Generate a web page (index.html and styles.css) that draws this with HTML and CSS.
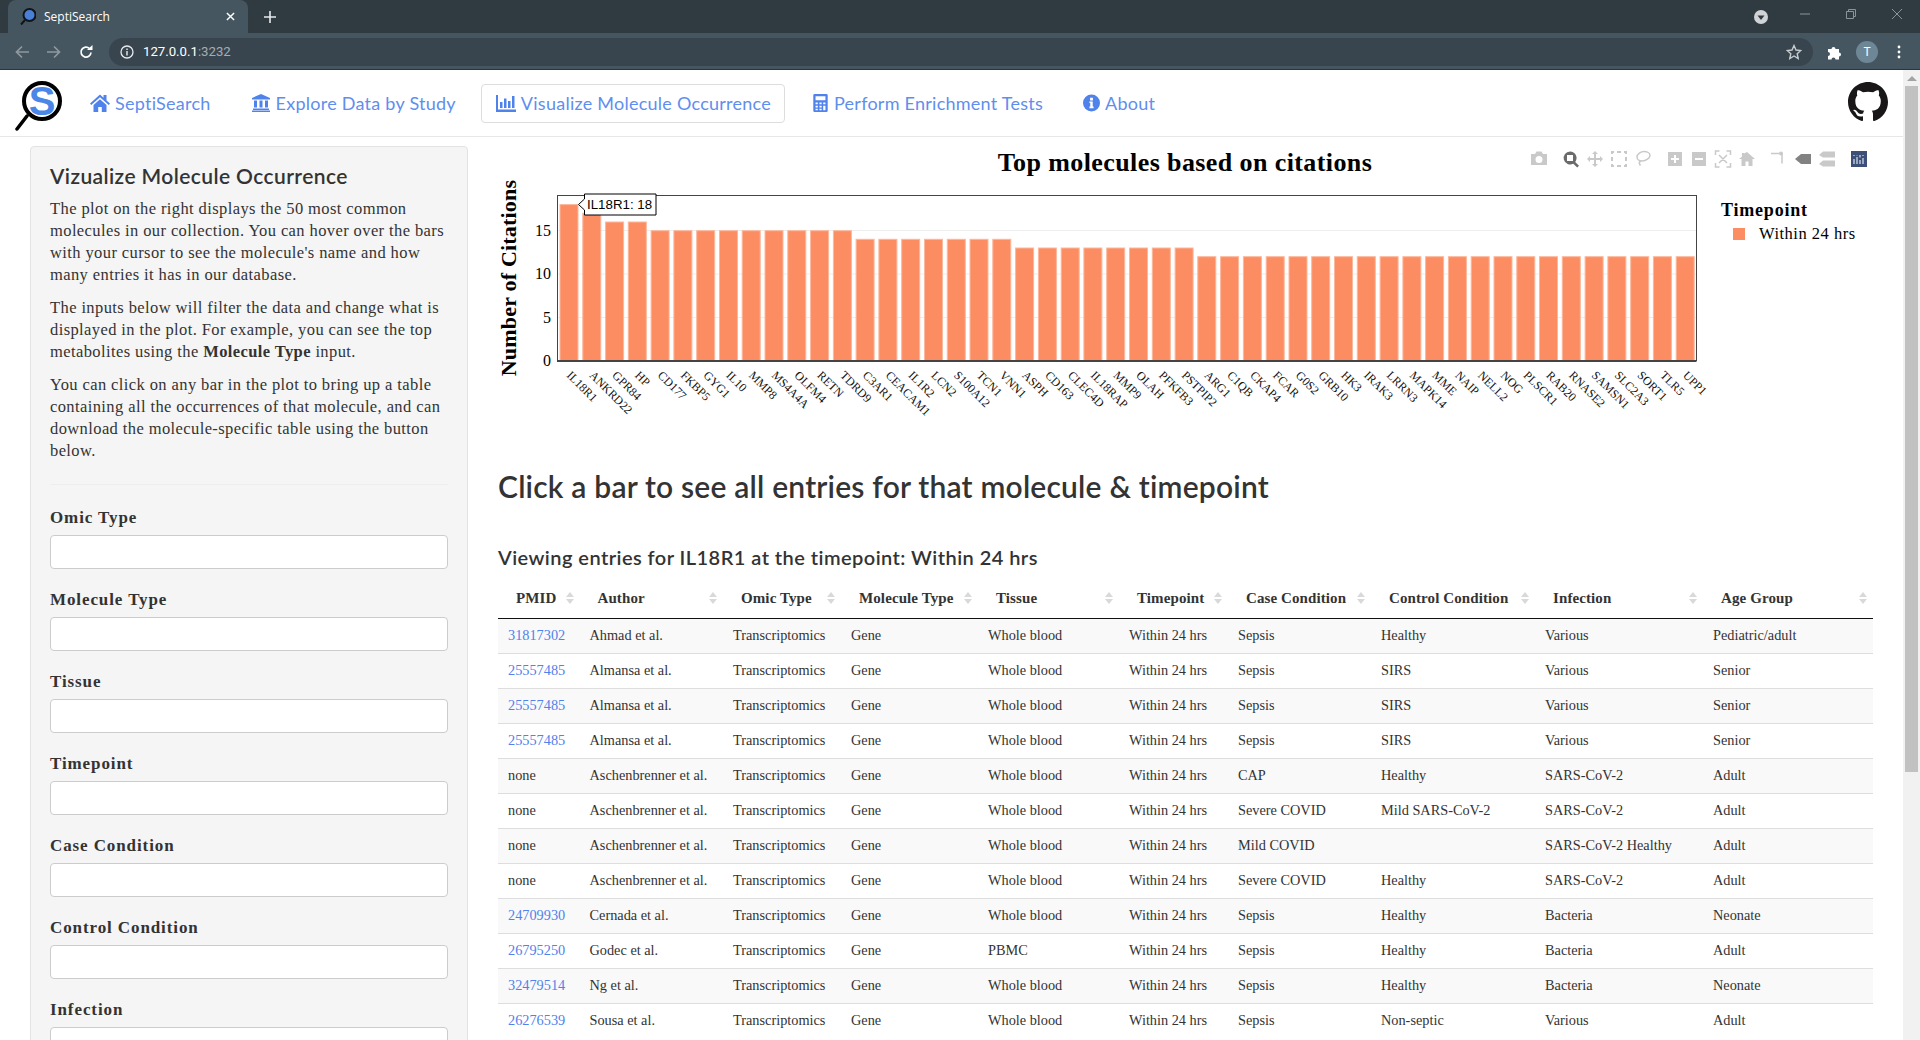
FILE: index.html
```html
<!DOCTYPE html>
<html>
  <head>
    <meta charset="utf-8" />
    <title>SeptiSearch</title>
    <link rel="stylesheet" href="styles.css">
  </head>
  <body>
    <!-- browser frame -->
    <div class="tabstrip">
      <div class="tab">
        <svg class="favicon" viewBox="0 0 16 18"><circle cx="9.5" cy="7" r="6" fill="#4a7fd8" stroke="#10151a" stroke-width="2"/><line x1="5" y1="12" x2="1" y2="16.5" stroke="#10151a" stroke-width="2"/></svg>
        <span class="tab-title">SeptiSearch</span>
        <svg class="tab-close" viewBox="0 0 10 10"><path d="M1 1l8 8M9 1l-8 8" stroke="#fff" stroke-width="1.6"/></svg>
      </div>
      <svg class="tab-new" viewBox="0 0 12 12"><path d="M6 0v12M0 6h12" stroke="#e8eaed" stroke-width="1.6"/></svg>
      <div class="window-controls">
        <svg class="tab-search" viewBox="0 0 14 14"><circle cx="7" cy="7" r="7" fill="#d0d4d6"/><path d="M3.5 5.5h7L7 10z" fill="#2f3a41"/></svg>
        <svg class="win-btn" viewBox="0 0 10 10"><path d="M0 5h10" stroke="#8b9499"/></svg>
        <svg class="win-btn" viewBox="0 0 10 10"><path d="M.5 2.5h7v7h-7zM2.5 2.500v-2h7v7h-2" fill="none" stroke="#8b9499"/></svg>
        <svg class="win-btn" viewBox="0 0 10 10"><path d="M0 0l10 10M10 0L0 10" stroke="#8b9499"/></svg>
      </div>
    </div>
    <div class="toolbar">
      <svg class="tool-icon" viewBox="0 0 14 14"><path d="M14 7H2M7 1.500L1.500 7 7 12.500" fill="none" stroke="#8f999f" stroke-width="1.700"/></svg>
      <svg class="tool-icon" viewBox="0 0 14 14"><path d="M0 7h12M7 1.500L12.500 7 7 12.500" fill="none" stroke="#8f999f" stroke-width="1.700"/></svg>
      <svg class="tool-icon" viewBox="0 0 14 14"><path d="M12 7.500A5 5 0 1 1 10.500 3.500" fill="none" stroke="#fff" stroke-width="1.700"/><path d="M8 5h5.500V0z" fill="#fff"/></svg>
      <div class="omnibox">
        <svg class="info-icon" viewBox="0 0 14 14"><circle cx="7" cy="7" r="6" fill="none" stroke="#e8eaed" stroke-width="1.300"/><path d="M7 6v4.500M7 3.500v1.400" stroke="#e8eaed" stroke-width="1.400"/></svg>
        <span class="url">127.0.0.1<span class="url-port">:3232</span></span>
        <svg class="star-icon" viewBox="0 0 16 16"><path d="M8 1.500l2 4.500 4.800.5-3.600 3.200 1 4.800L8 12l-4.200 2.500 1-4.800L1.200 6.500 6 6z" fill="none" stroke="#c6cbce" stroke-width="1.400"/></svg>
      </div>
      <svg class="puzzle-icon" viewBox="0 0 16 16"><path d="M1 5h3.500a2 2 0 1 1 4 0H12v3.500a2 2 0 1 1 0 4V15.500H8.500a2 2 0 1 0-4 0H1v-3.500a2 2 0 1 0 0-4z" fill="#fff"/></svg>
      <div class="avatar">T</div>
      <svg class="menu-icon" viewBox="0 0 4 14"><circle cx="2" cy="2" r="1.400" fill="#fff"/><circle cx="2" cy="7" r="1.400" fill="#fff"/><circle cx="2" cy="12" r="1.400" fill="#fff"/></svg>
    </div>

    <div class="viewport">
      <div class="page">
        <nav class="navbar">
          <svg class="logo" viewBox="0 0 48 50">
            <circle cx="27" cy="20" r="18" fill="#fff" stroke="#000" stroke-width="4"/>
            <text class="logo-s" x="27" y="34" text-anchor="middle">S</text>
            <line x1="12" y1="35" x2="2" y2="48" stroke="#000" stroke-width="3.500" stroke-linecap="round"/>
          </svg>
          <a class="nav-item">
            <svg class="nav-icon" viewBox="0 0 20 18"><path d="M10 0.500L0 9.500l1.300 1.400L10 3.300l8.700 7.600 1.300-1.400-3.500-3.100V1h-3v2.700zM3.500 11v7h4.700v-5h3.600v5h4.700v-7L10 5.200z" fill="#5082eb"/></svg>
            SeptiSearch
          </a>
          <a class="nav-item">
            <svg class="nav-icon" viewBox="0 0 20 18"><path d="M10 0L1 4v1.500h18V4zM3 6.500h3v7H3zM8.500 6.500h3v7h-3zM14 6.500h3v7h-3zM2 14.500h16V16H2zM1 16.500h18V18H1z" fill="#5082eb"/></svg>
            Explore Data by Study
          </a>
          <a class="nav-item nav-item-active">
            <svg class="nav-icon" viewBox="0 0 20 18"><path d="M0 1h2v14.500h18V18H0zM4 8h2.500v6H4zM8 4.500h2.500V14H8zM12 7h2.500v7H12zM16 2h2.500v12H16z" fill="#5082eb"/></svg>
            Visualize Molecule Occurrence
          </a>
          <a class="nav-item">
            <svg class="nav-icon nav-icon-narrow" viewBox="0 0 16 20"><path fill-rule="evenodd" d="M1.500 0h13A1.500 1.500 0 0 1 16 1.500v17a1.500 1.500 0 0 1-1.500 1.500h-13A1.500 1.500 0 0 1 0 18.500v-17A1.500 1.500 0 0 1 1.500 0zM2.500 2.500v4.500h11V2.500zM2.500 9.500v2h2.500v-2zM6.800 9.500v2h2.500v-2zM11 9.500v2h2.500v-2zM2.500 13v2h2.500v-2zM6.800 13v2h2.500v-2zM11 13v5h2.500v-5zM2.500 16.500v1.500h2.500v-1.500zM6.800 16.500v1.500h2.500v-1.500z" fill="#5082eb"/></svg>
            Perform Enrichment Tests
          </a>
          <a class="nav-item">
            <svg class="nav-icon nav-icon-narrow" viewBox="0 0 18 18"><path fill-rule="evenodd" d="M9 0a9 9 0 1 1 0 18A9 9 0 0 1 9 0zM7.500 3.500v2.800h3V3.500zM6.800 7.500v1.600h.9v3.700h-.9v1.700h4.400v-1.700h-.9V7.500z" fill="#5082eb"/></svg>
            About
          </a>
          <svg class="github" viewBox="0 0 16 16"><path fill="#191717" d="M8 0C3.580 0 0 3.580 0 8c0 3.540 2.290 6.530 5.470 7.590.4.070.55-.17.55-.38 0-.19-.01-.82-.01-1.490-2.010.37-2.530-.49-2.690-.94-.09-.23-.48-.94-.82-1.130-.28-.15-.68-.52-.01-.53.63-.01 1.080.58 1.230.82.72 1.210 1.870.87 2.330.66.07-.52.28-.87.51-1.070-1.780-.2-3.640-.89-3.640-3.950 0-.87.31-1.590.82-2.150-.08-.2-.36-1.020.08-2.120 0 0 .67-.21 2.200.82.64-.18 1.320-.27 2-.27.68 0 1.360.09 2 .27 1.530-1.040 2.200-.82 2.200-.82.44 1.100.16 1.920.08 2.120.51.56.82 1.270.82 2.150 0 3.070-1.870 3.750-3.650 3.950.29.25.54.73.54 1.480 0 1.070-.01 1.930-.01 2.200 0 .21.15.46.55.38A8.013 8.013 0 0 0 16 8c0-4.420-3.580-8-8-8z"/></svg>
        </nav>

        <div class="layout">
          <aside class="sidebar">
            <h4 class="side-title">Vizualize Molecule Occurrence</h4>
            <p>The plot on the right displays the 50 most common molecules in our collection. You can hover over the bars with your cursor to see the molecule's name and how many entries it has in our database.</p>
            <p>The inputs below will filter the data and change what is displayed in the plot. For example, you can see the top metabolites using the <b>Molecule Type</b> input.</p>
            <p>You can click on any bar in the plot to bring up a table containing all the occurrences of that molecule, and can download the molecule-specific table using the button below.</p>
            <hr class="side-rule" />
            <div class="field"><label>Omic Type</label><input type="text" /></div>
            <div class="field"><label>Molecule Type</label><input type="text" /></div>
            <div class="field"><label>Tissue</label><input type="text" /></div>
            <div class="field"><label>Timepoint</label><input type="text" /></div>
            <div class="field"><label>Case Condition</label><input type="text" /></div>
            <div class="field"><label>Control Condition</label><input type="text" /></div>
            <div class="field"><label>Infection</label><input type="text" /></div>
          </aside>

          <main class="content">
            <!-- viewBox uses page coordinates, easier to read off the plot -->
            <svg class="chart" viewBox="490 140 1383 310">
              <text class="chart-title" x="1185" y="171" text-anchor="middle">Top molecules based on citations</text>

              <line class="grid" x1="557" x2="1696" y1="317.500" y2="317.500"/>
              <line class="grid" x1="557" x2="1696" y1="274" y2="274"/>
              <line class="grid" x1="557" x2="1696" y1="230.500" y2="230.500"/>

              <g class="bars">
                <rect x="560.0" y="204.6" width="18" height="156.4"/>
                <rect x="582.8" y="213.3" width="18" height="147.7"/>
                <rect x="605.6" y="222" width="18" height="139"/>
                <rect x="628.3" y="222" width="18" height="139"/>
                <rect x="651.1" y="230.7" width="18" height="130.3"/>
                <rect x="673.9" y="230.7" width="18" height="130.3"/>
                <rect x="696.7" y="230.7" width="18" height="130.3"/>
                <rect x="719.5" y="230.7" width="18" height="130.3"/>
                <rect x="742.2" y="230.7" width="18" height="130.3"/>
                <rect x="765.0" y="230.7" width="18" height="130.3"/>
                <rect x="787.8" y="230.7" width="18" height="130.3"/>
                <rect x="810.6" y="230.7" width="18" height="130.3"/>
                <rect x="833.4" y="230.7" width="18" height="130.3"/>
                <rect x="856.1" y="239.3" width="18" height="121.7"/>
                <rect x="878.9" y="239.3" width="18" height="121.7"/>
                <rect x="901.7" y="239.3" width="18" height="121.7"/>
                <rect x="924.5" y="239.3" width="18" height="121.7"/>
                <rect x="947.3" y="239.3" width="18" height="121.7"/>
                <rect x="970.0" y="239.3" width="18" height="121.7"/>
                <rect x="992.8" y="239.3" width="18" height="121.7"/>
                <rect x="1015.6" y="248" width="18" height="113"/>
                <rect x="1038.4" y="248" width="18" height="113"/>
                <rect x="1061.2" y="248" width="18" height="113"/>
                <rect x="1083.9" y="248" width="18" height="113"/>
                <rect x="1106.7" y="248" width="18" height="113"/>
                <rect x="1129.5" y="248" width="18" height="113"/>
                <rect x="1152.3" y="248" width="18" height="113"/>
                <rect x="1175.1" y="248" width="18" height="113"/>
                <rect x="1197.8" y="256.7" width="18" height="104.3"/>
                <rect x="1220.6" y="256.7" width="18" height="104.3"/>
                <rect x="1243.4" y="256.7" width="18" height="104.3"/>
                <rect x="1266.2" y="256.7" width="18" height="104.3"/>
                <rect x="1289.0" y="256.7" width="18" height="104.3"/>
                <rect x="1311.7" y="256.7" width="18" height="104.3"/>
                <rect x="1334.5" y="256.7" width="18" height="104.3"/>
                <rect x="1357.3" y="256.7" width="18" height="104.3"/>
                <rect x="1380.1" y="256.7" width="18" height="104.3"/>
                <rect x="1402.9" y="256.7" width="18" height="104.3"/>
                <rect x="1425.6" y="256.7" width="18" height="104.3"/>
                <rect x="1448.4" y="256.7" width="18" height="104.3"/>
                <rect x="1471.2" y="256.7" width="18" height="104.3"/>
                <rect x="1494.0" y="256.7" width="18" height="104.3"/>
                <rect x="1516.8" y="256.7" width="18" height="104.3"/>
                <rect x="1539.5" y="256.7" width="18" height="104.3"/>
                <rect x="1562.3" y="256.7" width="18" height="104.3"/>
                <rect x="1585.1" y="256.7" width="18" height="104.3"/>
                <rect x="1607.9" y="256.7" width="18" height="104.3"/>
                <rect x="1630.7" y="256.7" width="18" height="104.3"/>
                <rect x="1653.4" y="256.7" width="18" height="104.3"/>
                <rect x="1676.2" y="256.7" width="18" height="104.3"/>
              </g>

              <rect class="plot-frame" x="557.500" y="195.500" width="1139" height="165.500"/>
              <line class="zero-line" x1="557" x2="1696" y1="361" y2="361"/>

              <text class="y-tick" x="551" y="366" text-anchor="end">0</text>
              <text class="y-tick" x="551" y="323" text-anchor="end">5</text>
              <text class="y-tick" x="551" y="279" text-anchor="end">10</text>
              <text class="y-tick" x="551" y="236" text-anchor="end">15</text>
              <text class="y-title" text-anchor="middle" transform="translate(516 278) rotate(-90)">Number of Citations</text>

              <g class="x-ticks">
                <text transform="translate(566.0 376) rotate(45)">IL18R1</text>
                <text transform="translate(588.8 376) rotate(45)">ANKRD22</text>
                <text transform="translate(611.6 376) rotate(45)">GPR84</text>
                <text transform="translate(634.3 376) rotate(45)">HP</text>
                <text transform="translate(657.1 376) rotate(45)">CD177</text>
                <text transform="translate(679.9 376) rotate(45)">FKBP5</text>
                <text transform="translate(702.7 376) rotate(45)">GYG1</text>
                <text transform="translate(725.5 376) rotate(45)">IL10</text>
                <text transform="translate(748.2 376) rotate(45)">MMP8</text>
                <text transform="translate(771.0 376) rotate(45)">MS4A4A</text>
                <text transform="translate(793.8 376) rotate(45)">OLFM4</text>
                <text transform="translate(816.6 376) rotate(45)">RETN</text>
                <text transform="translate(839.4 376) rotate(45)">TDRD9</text>
                <text transform="translate(862.1 376) rotate(45)">C3AR1</text>
                <text transform="translate(884.9 376) rotate(45)">CEACAM1</text>
                <text transform="translate(907.7 376) rotate(45)">IL1R2</text>
                <text transform="translate(930.5 376) rotate(45)">LCN2</text>
                <text transform="translate(953.3 376) rotate(45)">S100A12</text>
                <text transform="translate(976.0 376) rotate(45)">TCN1</text>
                <text transform="translate(998.8 376) rotate(45)">VNN1</text>
                <text transform="translate(1021.6 376) rotate(45)">ASPH</text>
                <text transform="translate(1044.4 376) rotate(45)">CD163</text>
                <text transform="translate(1067.2 376) rotate(45)">CLEC4D</text>
                <text transform="translate(1089.9 376) rotate(45)">IL18RAP</text>
                <text transform="translate(1112.7 376) rotate(45)">MMP9</text>
                <text transform="translate(1135.5 376) rotate(45)">OLAH</text>
                <text transform="translate(1158.3 376) rotate(45)">PFKFB3</text>
                <text transform="translate(1181.1 376) rotate(45)">PSTPIP2</text>
                <text transform="translate(1203.8 376) rotate(45)">ARG1</text>
                <text transform="translate(1226.6 376) rotate(45)">C1QB</text>
                <text transform="translate(1249.4 376) rotate(45)">CKAP4</text>
                <text transform="translate(1272.2 376) rotate(45)">FCAR</text>
                <text transform="translate(1295.0 376) rotate(45)">G0S2</text>
                <text transform="translate(1317.7 376) rotate(45)">GRB10</text>
                <text transform="translate(1340.5 376) rotate(45)">HK3</text>
                <text transform="translate(1363.3 376) rotate(45)">IRAK3</text>
                <text transform="translate(1386.1 376) rotate(45)">LRRN3</text>
                <text transform="translate(1408.9 376) rotate(45)">MAPK14</text>
                <text transform="translate(1431.6 376) rotate(45)">MME</text>
                <text transform="translate(1454.4 376) rotate(45)">NAIP</text>
                <text transform="translate(1477.2 376) rotate(45)">NELL2</text>
                <text transform="translate(1500.0 376) rotate(45)">NOG</text>
                <text transform="translate(1522.8 376) rotate(45)">PLSCR1</text>
                <text transform="translate(1545.5 376) rotate(45)">RAB20</text>
                <text transform="translate(1568.3 376) rotate(45)">RNASE2</text>
                <text transform="translate(1591.1 376) rotate(45)">SAMSN1</text>
                <text transform="translate(1613.9 376) rotate(45)">SLC2A3</text>
                <text transform="translate(1636.7 376) rotate(45)">SORT1</text>
                <text transform="translate(1659.4 376) rotate(45)">TLR5</text>
                <text transform="translate(1682.2 376) rotate(45)">UPP1</text>
              </g>

              <!-- hover label -->
              <path class="hover-box" d="M578.500 204.500l6-5.500v-5h71.500v21h-71.500v-5z"/>
              <text class="hover-text" x="587" y="209">IL18R1: 18</text>

              <text class="legend-title" x="1721" y="216">Timepoint</text>
              <rect class="legend-swatch" x="1733" y="228" width="12" height="12"/>
              <text class="legend-text" x="1759" y="239">Within 24 hrs</text>

              <!-- modebar -->
              <g class="modebar">
                <path d="M1531 154h4l1.500-2.500h5l1.500 2.500h4v11h-16zM1539 156a3.500 3.500 0 1 0 0 7 3.500 3.500 0 0 0 0-7z" fill-rule="evenodd"/>
                <path class="mode-active" fill-rule="evenodd" d="M1570 151.500a6.500 6.500 0 0 1 5.200 10.400l3.800 3.900-1.800 1.700-3.900-3.800a6.500 6.500 0 1 1-3.300-12.200zM1567 155v6h6v-6z"/>
                <path d="M1595 151l3 3h-2v4h4v-2l3 3-3 3v-2h-4v4h2l-3 3-3-3h2v-4h-4v2l-3-3 3-3v2h4v-4h-2z"/>
                <path d="M1611 151h3v2h-1v1h-2zM1617 151h4v2h-4zM1624 151h3v3h-2v-1h-1zM1611 157h2v4h-2zM1625 157h2v4h-2zM1611 164h2v1h1v2h-3zM1617 165h4v2h-4zM1625 164h2v3h-3v-2h1z"/>
                <path class="mode-line" d="M1637 157c0-3 4-5.500 7-5.500s6 1.500 6 4-4 5.500-8 5.500c-2.500 0-5-1.500-5-4zM1640 161c-1 1.500-1 3 .5 4.500"/>
                <path fill-rule="evenodd" d="M1668 152h14v14h-14zM1674 155v3h-3v2h3v3h2v-3h3v-2h-3v-3z"/>
                <path fill-rule="evenodd" d="M1692 152h14v14h-14zM1695 158v2h8v-2z"/>
                <path class="mode-line" d="M1715.500 155v-4h4M1726.500 151h4v4M1730.500 163v4h-4M1719.500 167h-4v-4M1719 155l8 8M1727 155l-8 8"/>
                <path d="M1747 152l8 7h-2.500v7h-4v-4.500h-3v4.500h-4v-7H1739l3-2.600V153h2v.6z"/>
                <path class="mode-line" d="M1771 153.500h8M1782 153.500v10"/>
                <circle cx="1781" cy="153.500" r="2"/>
                <path class="mode-dark" d="M1795 159l6-5h10v10h-10z"/>
                <path d="M1819 155l4-3.500h12v6h-12zM1819 164l4-3.500h12v6h-12z"/>
                <rect class="plotly-logo" x="1851" y="151" width="16" height="16"/>
                <path class="plotly-bars" d="M1854 159v5M1857 157v7M1860 160v4M1863 158v6M1854 155v1M1857 155v.5M1860 155v2.500M1863 155v1"/>
              </g>
            </svg>

            <h2 class="section-title">Click a bar to see all entries for that molecule &amp; timepoint</h2>
            <h3 class="table-title">Viewing entries for IL18R1 at the timepoint: Within 24 hrs</h3>

            <table class="entries">
              <colgroup>
                <col class="c-pmid" /><col class="c-author" /><col class="c-omic" /><col class="c-mol" /><col class="c-tissue" />
                <col class="c-time" /><col class="c-case" /><col class="c-ctrl" /><col class="c-inf" /><col class="c-age" />
              </colgroup>
              <thead>
                <tr>
                  <th>PMID</th><th>Author</th><th>Omic Type</th><th>Molecule Type</th><th>Tissue</th>
                  <th>Timepoint</th><th>Case Condition</th><th>Control Condition</th><th>Infection</th><th>Age Group</th>
                </tr>
              </thead>
              <tbody>
                <tr><td><a>31817302</a></td><td>Ahmad et al.</td><td>Transcriptomics</td><td>Gene</td><td>Whole blood</td><td>Within 24 hrs</td><td>Sepsis</td><td>Healthy</td><td>Various</td><td>Pediatric/adult</td></tr>
                <tr><td><a>25557485</a></td><td>Almansa et al.</td><td>Transcriptomics</td><td>Gene</td><td>Whole blood</td><td>Within 24 hrs</td><td>Sepsis</td><td>SIRS</td><td>Various</td><td>Senior</td></tr>
                <tr><td><a>25557485</a></td><td>Almansa et al.</td><td>Transcriptomics</td><td>Gene</td><td>Whole blood</td><td>Within 24 hrs</td><td>Sepsis</td><td>SIRS</td><td>Various</td><td>Senior</td></tr>
                <tr><td><a>25557485</a></td><td>Almansa et al.</td><td>Transcriptomics</td><td>Gene</td><td>Whole blood</td><td>Within 24 hrs</td><td>Sepsis</td><td>SIRS</td><td>Various</td><td>Senior</td></tr>
                <tr><td>none</td><td>Aschenbrenner et al.</td><td>Transcriptomics</td><td>Gene</td><td>Whole blood</td><td>Within 24 hrs</td><td>CAP</td><td>Healthy</td><td>SARS-CoV-2</td><td>Adult</td></tr>
                <tr><td>none</td><td>Aschenbrenner et al.</td><td>Transcriptomics</td><td>Gene</td><td>Whole blood</td><td>Within 24 hrs</td><td>Severe COVID</td><td>Mild SARS-CoV-2</td><td>SARS-CoV-2</td><td>Adult</td></tr>
                <tr><td>none</td><td>Aschenbrenner et al.</td><td>Transcriptomics</td><td>Gene</td><td>Whole blood</td><td>Within 24 hrs</td><td>Mild COVID</td><td></td><td>SARS-CoV-2 Healthy</td><td>Adult</td></tr>
                <tr><td>none</td><td>Aschenbrenner et al.</td><td>Transcriptomics</td><td>Gene</td><td>Whole blood</td><td>Within 24 hrs</td><td>Severe COVID</td><td>Healthy</td><td>SARS-CoV-2</td><td>Adult</td></tr>
                <tr><td><a>24709930</a></td><td>Cernada et al.</td><td>Transcriptomics</td><td>Gene</td><td>Whole blood</td><td>Within 24 hrs</td><td>Sepsis</td><td>Healthy</td><td>Bacteria</td><td>Neonate</td></tr>
                <tr><td><a>26795250</a></td><td>Godec et al.</td><td>Transcriptomics</td><td>Gene</td><td>PBMC</td><td>Within 24 hrs</td><td>Sepsis</td><td>Healthy</td><td>Bacteria</td><td>Adult</td></tr>
                <tr><td><a>32479514</a></td><td>Ng et al.</td><td>Transcriptomics</td><td>Gene</td><td>Whole blood</td><td>Within 24 hrs</td><td>Sepsis</td><td>Healthy</td><td>Bacteria</td><td>Neonate</td></tr>
                <tr><td><a>26276539</a></td><td>Sousa et al.</td><td>Transcriptomics</td><td>Gene</td><td>Whole blood</td><td>Within 24 hrs</td><td>Sepsis</td><td>Non-septic</td><td>Various</td><td>Adult</td></tr>
              </tbody>
            </table>
          </main>
        </div>
      </div>

      <div class="scrollbar">
        <div class="scroll-up"></div>
        <div class="scroll-thumb"></div>
      </div>
    </div>
  </body>
</html>
```

FILE: styles.css
```css
* {
  box-sizing: border-box;
}

html,
body {
  margin: 0;
  height: 1040px;
  overflow: hidden;
}

body {
  display: flex;
  flex-direction: column;
  background-color: #fff;
  color: #333;
  font-family: "Liberation Serif", serif;
}

/* browser frame */
.tabstrip {
  flex: none;
  display: flex;
  align-items: flex-start;
  height: 33px;
  padding-left: 8px;
  background-color: #2f3a41;
}

.tab {
  display: flex;
  align-items: center;
  width: 240px;
  height: 33px;
  padding: 0 13px 0 12px;
  border-radius: 8px 8px 0 0;
  background-color: #455660;
}

.favicon {
  width: 16px;
  height: 18px;
}

.tab-title {
  flex: 1;
  margin-left: 8px;
  color: #fff;
  font: 12px "Open Sans", sans-serif;
}

.tab-close {
  width: 9px;
  height: 9px;
}

.tab-new {
  width: 12px;
  height: 12px;
  margin: 11px 0 0 16px;
}

.window-controls {
  margin-left: auto;
  display: flex;
  align-items: center;
  height: 28px;
  padding-right: 18px;
}

.tab-search {
  width: 14px;
  height: 14px;
  margin: 6px -4px 0 0;
}

.win-btn {
  width: 10px;
  height: 10px;
  margin-left: 36px;
}

.toolbar {
  flex: none;
  display: flex;
  align-items: center;
  height: 37px;
  padding: 1px 0 0 15px;
  border-bottom: 1px solid #2b353b;
  background-color: #455660;
}

.tool-icon {
  width: 14px;
  height: 14px;
  margin-right: 18px;
}

.omnibox {
  display: flex;
  align-items: center;
  width: 1704px;
  height: 28px;
  margin-left: -2px;
  padding: 0 11px 0 11px;
  border-radius: 14px;
  background-color: #38454e;
}

.info-icon {
  width: 14px;
  height: 14px;
}

.url {
  margin-left: 9px;
  color: #fff;
  font: 13.200px Roboto, sans-serif;
}

.url-port {
  color: #a6adb2;
}

.star-icon {
  width: 16px;
  height: 16px;
  margin-left: auto;
}

.puzzle-icon {
  width: 16px;
  height: 16px;
  margin-left: 14px;
}

.avatar {
  width: 22px;
  height: 22px;
  margin-left: 13px;
  border-radius: 50%;
  background-color: #6e8797;
  color: #fff;
  font: 12px/22px Roboto, sans-serif;
  text-align: center;
}

.menu-icon {
  width: 4px;
  height: 14px;
  margin-left: 19px;
}

/* page */
.viewport {
  flex: 1;
  display: flex;
  min-height: 0;
}

.page {
  flex: 1;
  min-width: 0;
  overflow: hidden;
}

.scrollbar {
  flex: none;
  width: 17px;
  padding: 0 2px;
  background-color: #f1f1f1;
}

.scroll-up {
  width: 0;
  margin: 6px auto 5px;
  border-right: 5px solid transparent;
  border-left: 5px solid transparent;
  border-bottom: 5px solid #a3a3a3;
}

.scroll-thumb {
  height: 686px;
  background-color: #c1c1c1;
}

.navbar {
  display: flex;
  align-items: center;
  height: 67px;
  padding-left: 15px;
  border-bottom: 1px solid #e7e7e7;
}

.logo {
  width: 48px;
  height: 50px;
  margin: 6px 12px 0 0;
}

.logo-s {
  fill: #4a86e8;
  font: bold 40px "Liberation Sans", sans-serif;
}

.nav-item {
  display: flex;
  align-items: center;
  gap: 5px;
  height: 39px;
  margin-right: 12px;
  padding: 0 12px 0 14px;
  border: 1px solid transparent;
  border-radius: 4px;
  color: #5f8eee;
  font: 400 18px Lato, sans-serif;
  letter-spacing: 0.25px;
}

.nav-item-active {
  padding-right: 13px;
  border-color: #ddd;
}

.nav-icon {
  width: 20px;
  height: 18px;
}

.nav-icon-narrow {
  width: 17px;
  height: 18px;
}

.github {
  width: 40px;
  height: 40px;
  margin: -3px 15px 0 auto;
}

.layout {
  display: flex;
  align-items: flex-start;
}

.sidebar {
  flex: none;
  width: 438px;
  margin: 9px 22px 0 30px;
  padding: 19px;
  border: 1px solid #e3e3e3;
  border-radius: 4px;
  background-color: #f5f5f5;
}

.side-title {
  margin: -1px 0 11px;
  font: 600 21px/22px Lato, sans-serif;
  letter-spacing: 0.4px;
}

.sidebar p {
  margin: 0 0 11px;
  font-size: 16.500px;
  line-height: 22px;
  letter-spacing: 0.4px;
}

.side-rule {
  margin: 22px 0 22px;
  border: 0;
  border-top: 1px solid #eee;
}

.field {
  margin-bottom: 20px;
}

.field label {
  display: block;
  margin-bottom: 6px;
  font-size: 17px;
  font-weight: bold;
  line-height: 22px;
  letter-spacing: 0.9px;
}

.field input {
  display: block;
  width: 100%;
  height: 34px;
  border: 1px solid #ccc;
  border-radius: 4px;
  background-color: #fff;
}

.content {
  flex: 1;
  min-width: 0;
  padding-top: 3px;
}

.chart {
  display: block;
  width: 1383px;
  height: 310px;
}

.chart-title {
  fill: #000;
  font-size: 26px;
  font-weight: bold;
  letter-spacing: 0.4px;
}

.grid {
  stroke: #eee;
}

.bars rect {
  fill: #fc8d62;
  stroke: #fdb79c;
  stroke-width: 1;
}

.plot-frame {
  fill: none;
  stroke: #444;
}

.zero-line {
  stroke: #444;
  stroke-width: 2;
}

.y-tick {
  fill: #000;
  font-size: 16px;
}

.y-title {
  fill: #000;
  font-size: 22px;
  font-weight: bold;
  letter-spacing: 0.2px;
}

.x-ticks text {
  fill: #111;
  font-size: 12px;
}

.hover-box {
  fill: #fff;
  stroke: #000;
}

.hover-text {
  fill: #000;
  font: 13.3px "Liberation Sans", sans-serif;
}

.legend-title {
  fill: #000;
  font-size: 18px;
  font-weight: bold;
  letter-spacing: 0.8px;
}

.legend-text {
  fill: #000;
  font-size: 16.500px;
  letter-spacing: 0.5px;
}

.legend-swatch {
  fill: #fc8d62;
}

.modebar path,
.modebar circle {
  fill: #c9c9c9;
}

.modebar .mode-line {
  fill: none;
  stroke: #c9c9c9;
  stroke-width: 1.500;
}

.modebar .mode-active {
  fill: #6b6b6b;
}

.modebar .mode-dark {
  fill: #828282;
}

.plotly-logo {
  fill: #3d4f78;
}

.modebar .plotly-bars {
  fill: none;
  stroke: #d6e4ee;
  stroke-width: 1.200;
}

.section-title {
  margin: 18px 0 0 8px;
  font: 600 30px/36px Lato, sans-serif;
  letter-spacing: 0.2px;
}

.table-title {
  margin: 41px 0 0 8px;
  font: 600 20px/24px Lato, sans-serif;
  letter-spacing: 0.45px;
}

.entries {
  width: 1375px;
  margin: 11px 0 0 8px;
  border-collapse: collapse;
  table-layout: fixed;
  font-size: 14.300px;
}

.c-pmid { width: 81.500px; }
.c-author { width: 143.500px; }
.c-omic { width: 118px; }
.c-mol { width: 137px; }
.c-tissue { width: 141px; }
.c-time { width: 109px; }
.c-case { width: 143px; }
.c-ctrl { width: 164px; }
.c-inf { width: 168px; }
.c-age { width: 170px; }

.entries th {
  position: relative;
  height: 38px;
  padding: 0 18px;
  border-bottom: 1px solid #111;
  font-size: 15px;
  letter-spacing: 0.1px;
  text-align: left;
}

/* sort arrows */
.entries th::before,
.entries th::after {
  content: "";
  position: absolute;
  right: 6px;
  border-right: 4px solid transparent;
  border-left: 4px solid transparent;
}

.entries th::before {
  top: 12px;
  border-bottom: 5px solid #d9d9d9;
}

.entries th::after {
  top: 19px;
  border-top: 5px solid #d9d9d9;
}

.entries td {
  height: 35px;
  padding: 0 10px;
  border-top: 1px solid #ddd;
  white-space: nowrap;
}

.entries tbody tr:first-child td {
  border-top: 0;
}

.entries tbody tr:nth-child(odd) {
  background-color: #f9f9f9;
}

.entries a {
  color: #5082eb;
}
```
